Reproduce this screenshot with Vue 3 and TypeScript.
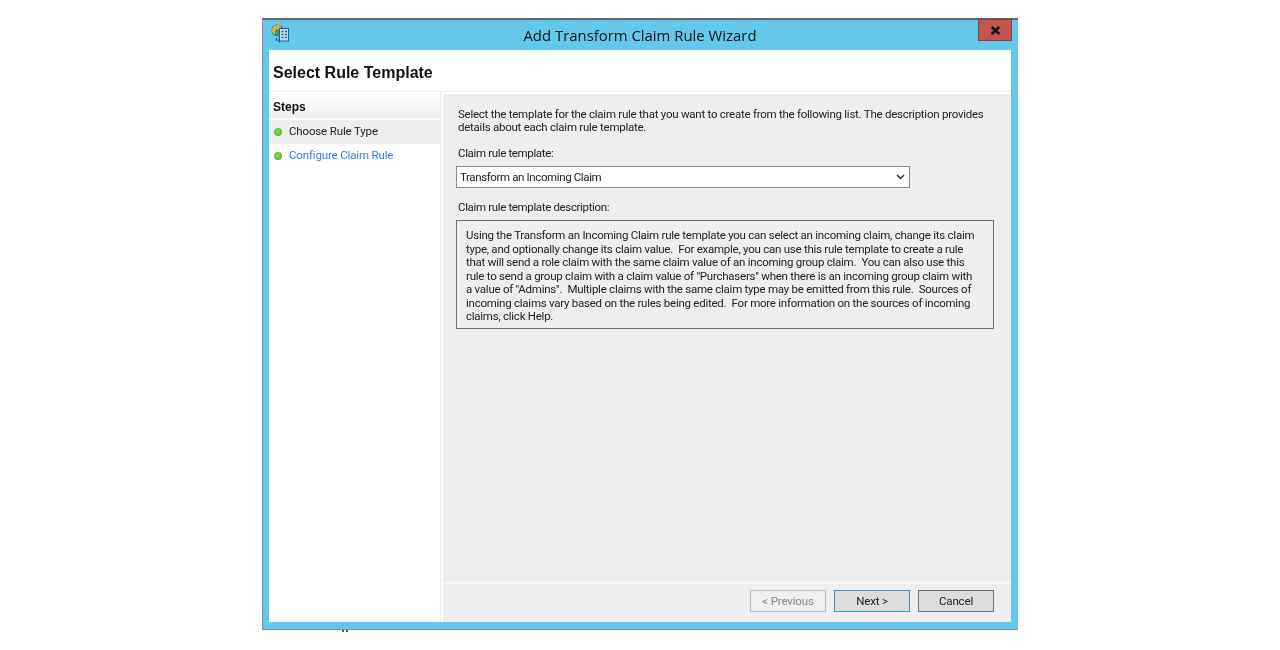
<script setup lang="ts">
const steps = [
  { label: 'Choose Rule Type', active: true },
  { label: 'Configure Claim Rule', active: false },
]

const introLines = [
  'Select the template for the claim rule that you want to create from the following list. The description provides',
  'details about each claim rule template.',
]

const descLines = [
  'Using the Transform an Incoming Claim rule template you can select an incoming claim, change its claim',
  'type, and optionally change its claim value.  For example, you can use this rule template to create a rule',
  'that will send a role claim with the same claim value of an incoming group claim.  You can also use this',
  'rule to send a group claim with a claim value of "Purchasers" when there is an incoming group claim with',
  'a value of "Admins".  Multiple claims with the same claim type may be emitted from this rule.  Sources of',
  'incoming claims vary based on the rules being edited.  For more information on the sources of incoming',
  'claims, click Help.',
]
</script>

<template>
  <div class="page">
    <div class="window">
      <div class="titlebar">
        <svg class="app-icon" width="20" height="20" viewBox="0 0 20 20">
          <circle cx="6.5" cy="6.5" r="6" fill="#2a78c8" />
          <path d="M1.5 4 C3.5 0.5 8 0 10.5 2.5 L8.5 6 L5 5 L4 10.5 C1 9 0.3 6.5 1.5 4Z" fill="#e6b030" />
          <path d="M4 7 L8.5 6.5 L8.5 11.5 L5.5 12Z" fill="#3f9e3a" />
          <rect x="8.5" y="4.5" width="9" height="12.5" fill="#bcdcf5" stroke="#1f5fa8" />
          <path d="M10.5 7.5h2M14 7.5h2M10.5 10.5h2M14 10.5h2M10.5 13.5h2M14 13.5h2" stroke="#1f5fa8" stroke-width="1.6" />
          <path d="M5.5 14v3M8 15v3.5" stroke="#1f5fa8" stroke-width="1.4" />
        </svg>
        <span class="title">Add Transform Claim Rule Wizard</span>
        <div class="close">
          <svg width="11" height="9" viewBox="0 0 11 9">
            <path d="M1.8 1 L9.2 8 M9.2 1 L1.8 8" fill="none" stroke="#111" stroke-width="2.6" />
          </svg>
        </div>
      </div>

      <div class="inner">
        <div class="header">Select Rule Template</div>
        <div class="body">
          <aside class="sidebar">
            <div class="steps-head">Steps</div>
            <div
              v-for="step in steps"
              :key="step.label"
              class="step"
              :class="{ current: step.active }"
            >
              <span class="dot"></span>
              <span class="step-label">{{ step.label }}</span>
            </div>
          </aside>

          <main class="content">
            <div class="form">
              <p class="intro">
                <span v-for="line in introLines" :key="line" class="line">{{ line }}</span>
              </p>

              <div class="field-label">Claim rule template:</div>
              <div class="select">
                <span>Transform an Incoming Claim</span>
                <svg width="9" height="6" viewBox="0 0 9 6">
                  <path d="M1 1 L4.5 4.5 L8 1" fill="none" stroke="#333" stroke-width="1.5" />
                </svg>
              </div>

              <div class="desc-label">Claim rule template description:</div>
              <div class="desc">
                <span v-for="line in descLines" :key="line" class="line">{{ line }}</span>
              </div>
            </div>

            <div class="footer">
              <button class="btn disabled" type="button">&lt; Previous</button>
              <button class="btn primary" type="button">Next &gt;</button>
              <button class="btn" type="button">Cancel</button>
            </div>
          </main>
        </div>
      </div>
      <span class="speck"></span>
    </div>
  </div>
</template>

<style scoped>
.page {
  display: flex;
  justify-content: center;
  height: 650px;
  padding-top: 18px;
  box-sizing: border-box;
  background: #fff;
  font-family: Roboto, "Liberation Sans", sans-serif;
  font-size: 11.5px;
  letter-spacing: -0.25px;
  color: #222;
}

.window {
  width: 756px;
  height: 612px;
  box-sizing: border-box;
  display: flex;
  flex-direction: column;
  position: relative;
  background: #64c8eb;
  border-top: 2px solid #666;
  border-left: 1px solid #8a8a8a;
  border-bottom: 1px solid #888;
  filter: blur(0.3px);
}

.speck {
  position: absolute;
  left: 79px;
  bottom: -3px;
  width: 6px;
  height: 2px;
  background: repeating-linear-gradient(90deg, #555 0 2px, transparent 2px 4px);
}

.titlebar {
  flex: none;
  height: 30px;
  display: flex;
  align-items: center;
  justify-content: center;
  position: relative;
}

.app-icon {
  position: absolute;
  left: 8px;
  top: 4px;
}

.title {
  font-family: "Open Sans", sans-serif;
  font-size: 14.9px;
  letter-spacing: 0;
  color: #111;
  margin-right: 1px;
}

.close {
  position: absolute;
  right: 6px;
  top: -1px;
  width: 34px;
  height: 22px;
  box-sizing: border-box;
  background: #c0564c;
  border: 1px solid #7a4a48;
  display: flex;
  align-items: center;
  justify-content: center;
}

.inner {
  width: 742px;
  height: 572px;
  margin-left: 6px;
  display: flex;
  flex-direction: column;
  background: #fff;
}

.header {
  flex: none;
  height: 42px;
  line-height: 45px;
  padding-left: 4px;
  font-family: "Liberation Sans", sans-serif;
  font-weight: bold;
  font-size: 16px;
  letter-spacing: 0;
  color: #111;
  border-bottom: 1px solid #eee;
  box-sizing: border-box;
}

.body {
  flex: 1;
  display: flex;
  min-height: 0;
}

.sidebar {
  flex: none;
  width: 171px;
  padding-top: 2px;
  background: #fff;
  border-right: 1px solid #ececec;
}

.steps-head {
  height: 24px;
  line-height: 26px;
  margin-bottom: 2px;
  padding-left: 4px;
  font-family: "Liberation Sans", sans-serif;
  font-size: 12px;
  font-weight: bold;
  letter-spacing: 0;
  color: #111;
  background: linear-gradient(#fff, #f0f0f0);
}

.step {
  height: 24px;
  display: flex;
  align-items: center;
  padding-left: 5px;
  gap: 7px;
  letter-spacing: -0.15px;
  color: #2f7cf0;
}

.step-label {
  margin-bottom: 2px;
}

.step.current {
  background: #eeeeee;
  color: #222;
}

.dot {
  width: 8px;
  height: 8px;
  border-radius: 50%;
  background: radial-gradient(circle at 45% 40%, #8fdc5e, #3da52c);
}

.content {
  flex: 1;
  min-width: 0;
  margin-left: 2px;
  margin-top: 2px;
  display: flex;
  flex-direction: column;
  background: #eeeeee;
}

.form {
  flex: 1;
  padding: 14px 18px 0 13px;
}

.line {
  display: block;
  white-space: pre;
}

.intro {
  margin: 0;
  padding-left: 2px;
  line-height: 13px;
}

.field-label,
.desc-label {
  padding-left: 2px;
  line-height: 14px;
  letter-spacing: -0.35px;
}

.field-label {
  margin-top: 12px;
}

.select {
  margin-top: 6px;
  width: 454px;
  height: 22px;
  box-sizing: border-box;
  padding: 0 4px 0 3px;
  display: flex;
  align-items: center;
  justify-content: space-between;
  letter-spacing: -0.38px;
  background: #fff;
  border: 1px solid #8a8a8a;
}

.desc-label {
  margin-top: 12px;
}

.desc {
  margin-top: 6px;
  width: 538px;
  height: 109px;
  box-sizing: border-box;
  padding: 8px 0 0 9px;
  border: 1px solid #707070;
  line-height: 13.5px;
}

.footer {
  flex: none;
  height: 40px;
  border-top: 2px solid #f7f7f7;
  display: flex;
  justify-content: flex-end;
  align-items: flex-start;
  gap: 8px;
  padding: 6px 17px 0 0;
  box-sizing: border-box;
}

.btn {
  width: 76px;
  height: 22px;
  padding: 0;
  font: inherit;
  letter-spacing: -0.15px;
  color: #222;
  background: #dcdcdc;
  border: 1px solid #707070;
  box-sizing: border-box;
}

.btn.primary {
  border-color: #4a90c0;
}

.btn.disabled {
  background: #efefef;
  border-color: #bbb;
  color: #888;
}
</style>

<style>
body {
  background: #fff;
}
</style>
